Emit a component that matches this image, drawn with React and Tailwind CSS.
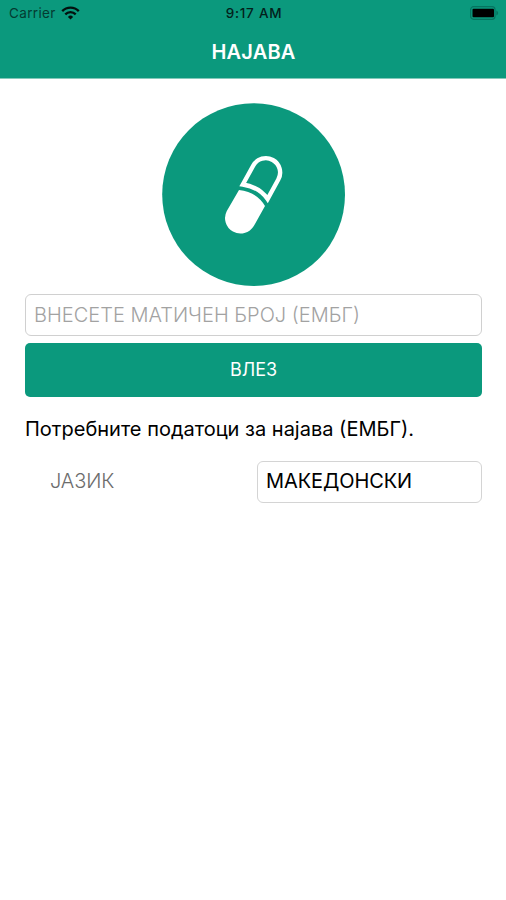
function StatusBar() {
  return (
    <div className="grid h-[27px] grid-cols-3 items-center pl-[9px] pr-[7px] text-[13.5px] text-[#043b31]">
      <div className="flex items-center gap-[5px]">
        <span className="tracking-[0.35px]">Carrier</span>
        <svg className="mb-px" width="19" height="14" viewBox="0 0 19 14" fill="none" stroke="#03110e" strokeWidth="2.3">
          <path d="M1.2 5.1a11.7 11.7 0 0 1 16.6 0" />
          <path d="M4.3 8.4a7.3 7.3 0 0 1 10.4 0" />
          <path d="M9.5 13.5 6.9 10.9a3.7 3.7 0 0 1 5.2 0z" fill="#03110e" stroke="none" />
        </svg>
      </div>
      <span className="text-center font-medium tracking-[0.75px] text-[#03211b]">9:17 AM</span>
      <svg className="mb-[2px] justify-self-end" width="30" height="14" viewBox="0 0 30 14">
        <rect x="1.6" y="0.7" width="24.4" height="12.6" rx="3" fill="none" stroke="#067460" strokeWidth="1.2" />
        <rect x="3.5" y="2.8" width="21.5" height="8.4" rx="1" fill="#000" />
        <path d="M27.3 4.5c2.4.7 2.4 4.3 0 5z" fill="#067460" />
      </svg>
    </div>
  );
}

function PillLogo() {
  return (
    <svg className="mx-auto block" width="184" height="184" viewBox="0 0 184 184">
      <circle cx="92.6" cy="91.6" r="91.4" fill="#0b997d" />
      <path
        d="M81.8 81.5 92.3 62.5a14.3 14.3 0 0 1 25 14L106.6 96Q98 83.7 81.8 81.5Z"
        fill="none"
        stroke="#fff"
        strokeWidth="4.4"
      />
      <path d="M78 87.1 65.8 107.9a15.5 15.5 0 0 0 27 15.2L104 102.9Q95 88.5 78 87.1Z" fill="#fff" />
    </svg>
  );
}

export default function App() {
  return (
    <div className="min-h-[900px] w-full bg-white font-['Inter',sans-serif]">
      <header className="h-[79px] border-b border-[#83c9ba] bg-[#0b997d]">
        <StatusBar />
        <h1 className="pl-px text-center text-xl leading-[51px] font-semibold tracking-[0.2px] text-white">НАЈАВА</h1>
      </header>

      <main className="px-[25px] pt-6">
        <PillLogo />
        <input
          type="text"
          aria-label="ЕМБГ"
          className="mt-[7px] block h-[42px] w-[457px] rounded-md border-[1.5px] border-[#d0d0d0] px-2 text-xl font-light text-black outline-none placeholder:text-[#a2a2a2]"
          placeholder="ВНЕСЕТЕ МАТИЧЕН БРОЈ (ЕМБГ)"
        />
        <button type="button" className="mt-[7px] block h-[54px] w-[457px] rounded-[5px] bg-[#0b997d] text-lg text-white">
          ВЛЕЗ
        </button>
        <p className="mt-[17px] text-xl leading-[30px]">Потребните податоци за најава (ЕМБГ).</p>
        <div className="mt-[17px] flex w-[457px] items-center justify-between">
          <span className="pb-[2px] pl-[25px] text-xl font-light tracking-[-0.1px] text-[#6c6c6c]">ЈАЗИК</span>
          <div className="flex h-[42px] w-[225px] items-center rounded-md border-[1.5px] border-[#d4d4d4] px-2 pb-[2px] text-xl tracking-[-0.1px]">
            МАКЕДОНСКИ
          </div>
        </div>
      </main>
    </div>
  );
}
